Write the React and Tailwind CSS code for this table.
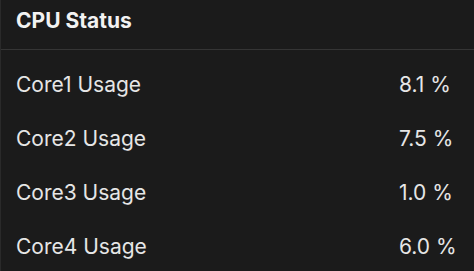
const cores = [
  { name: 'Core1 Usage', value: '8.1 %' },
  { name: 'Core2 Usage', value: '7.5 %' },
  { name: 'Core3 Usage', value: '1.0 %' },
  { name: 'Core4 Usage', value: '6.0 %' },
];

export default function App() {
  return (
    <div
      className="w-[474px] h-[271px] overflow-hidden bg-[#1b1b1b] border-l border-[#2a2a2a] text-[#e6e6e6]"
      style={{ fontFamily: 'Inter, "Noto Sans", sans-serif' }}
    >
      <div className="pl-[15px] pt-[7px] pb-[14px] border-b border-[#353535]">
        <h2 className="text-[21px] leading-[28px] font-bold text-[#f2f2f2]">CPU Status</h2>
      </div>
      <div className="mt-[8px] pl-[15px] pr-4">
        {cores.map((c) => (
          <div key={c.name} className="h-[54px] flex items-center justify-between">
            <span className="text-[21px] leading-[28px]">{c.name}</span>
            <span className="w-[59px] text-[21px] leading-[28px] text-left">{c.value}</span>
          </div>
        ))}
      </div>
    </div>
  );
}
